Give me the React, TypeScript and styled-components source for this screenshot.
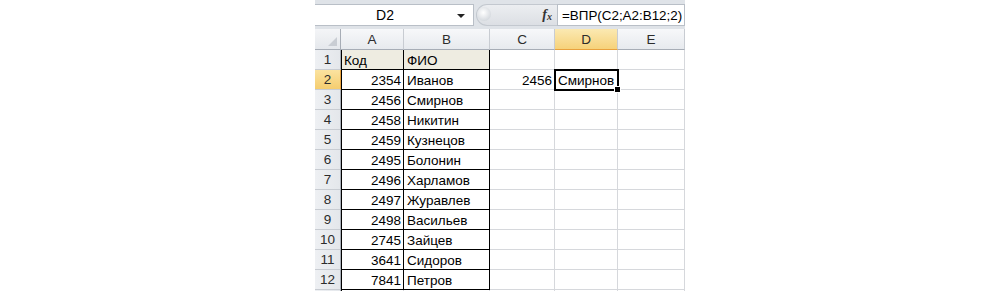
import React from "react";
import styled, { createGlobalStyle, css } from "styled-components";

const Global = createGlobalStyle`
  html, body { margin: 0; padding: 0; background: #ffffff; }
  body { font-family: "Liberation Sans", Arial, sans-serif; color: #000; }
`;

const Page = styled.div`
  width: 1000px;
  height: 291px;
  overflow: hidden;
  display: flex;
  justify-content: center;
`;

const Sheet = styled.div`
  width: 370px;
  display: flex;
  flex-direction: column;
`;

const FormulaBar = styled.div`
  height: 29px;
  box-sizing: border-box;
  padding: 4px 0 3px;
  background: #dfe3e8;
  display: flex;
  align-items: stretch;
`;

const NameBox = styled.div`
  width: 159px;
  box-sizing: border-box;
  background: #fff;
  border: 1px solid #b9bfc7;
  border-left: none;
  display: flex;
  align-items: center;
  font-size: 14px;
`;

const NameText = styled.span`
  flex: 1;
  text-align: center;
  padding-left: 4px;
`;

const DropArrow = styled.span`
  width: 0;
  height: 0;
  border-left: 4px solid transparent;
  border-right: 4px solid transparent;
  border-top: 4px solid #222;
  margin: 2px 8px 0 6px;
`;

const Splitter = styled.div`
  width: 83px;
  display: flex;
  align-items: center;
  position: relative;
`;

const Pill = styled.div`
  height: 22px;
  flex: 1;
  margin-left: 2px;
  border-radius: 11px 0 0 11px;
  background: linear-gradient(#eceef1, #dcdfe4);
  border: 1px solid #c3c8cf;
  border-right: none;
  display: flex;
  align-items: center;
  justify-content: flex-end;
  box-sizing: border-box;
`;

const Knob = styled.div`
  position: absolute;
  left: 3px;
  top: 3px;
  width: 14px;
  height: 14px;
  border-radius: 50%;
  background: radial-gradient(circle at 45% 40%, #ffffff, #d7dbe0 70%, #c2c7ce);
`;

const Fx = styled.span`
  font-family: "Liberation Serif", "Times New Roman", serif;
  font-style: italic;
  font-weight: bold;
  font-size: 14px;
  color: #333;
  margin-right: 5px;
  sub {
    font-size: 10px;
    vertical-align: -1px;
  }
`;

const FormulaInput = styled.div`
  flex: 1;
  background: #fff;
  border: 1px solid #b9bfc7;
  box-sizing: border-box;
  font-size: 13.4px;
  display: flex;
  align-items: center;
  padding-left: 4px;
  white-space: nowrap;
`;

const Grid = styled.div`
  display: grid;
  grid-template-columns: 26px 63px 86px 65px 63px 67px;
  grid-auto-rows: 20px;
  grid-template-rows: 21px;
  font-size: 13.5px;
`;

const Corner = styled.div`
  box-sizing: border-box;
  background: linear-gradient(#f4f5f7, #e5e8ec);
  border-right: 1px solid #a7adb6;
  border-bottom: 1px solid #a7adb6;
  position: relative;
  &::after {
    content: "";
    position: absolute;
    right: 3px;
    bottom: 3px;
    width: 0;
    height: 0;
    border-left: 9px solid transparent;
    border-bottom: 9px solid #c9cdd3;
  }
`;

const ColHead = styled.div<{ $active?: boolean }>`
  box-sizing: border-box;
  display: flex;
  align-items: center;
  justify-content: center;
  color: #2c2c2c;
  border-right: 1px solid #c8ccd2;
  border-bottom: 1px solid #a7adb6;
  background: linear-gradient(#f7f8fa, #e7eaee);
  ${(p) =>
    p.$active &&
    css`
      background: linear-gradient(#fbe9b2, #f6d27a);
      border-bottom: 1px solid #e8a23e;
    `}
`;

const RowHead = styled.div<{ $active?: boolean }>`
  box-sizing: border-box;
  display: flex;
  align-items: center;
  justify-content: center;
  color: #2c2c2c;
  border-right: 1px solid #a7adb6;
  border-bottom: 1px solid #c8ccd2;
  background: linear-gradient(90deg, #eef0f3, #e4e7eb);
  ${(p) =>
    p.$active &&
    css`
      background: linear-gradient(#fbe3a0, #f5cd6f);
      border-right: 1px solid #e8a23e;
    `}
`;

const Cell = styled.div<{
  $num?: boolean;
  $table?: boolean;
  $first?: boolean;
  $head?: boolean;
  $selected?: boolean;
}>`
  box-sizing: border-box;
  display: flex;
  align-items: center;
  justify-content: ${(p) => (p.$num ? "flex-end" : "flex-start")};
  padding: 1px 2px 0 3px;
  white-space: nowrap;
  position: relative;
  border-right: 1px solid #d6d8dc;
  border-bottom: 1px solid #d6d8dc;
  ${(p) =>
    p.$table &&
    css`
      border-right-color: #000;
      border-bottom-color: #000;
    `}
  ${(p) =>
    p.$first &&
    css`
      box-shadow: inset 1px 0 0 #000;
    `}
  ${(p) =>
    p.$head &&
    css`
      background: #eeece1;
    `}
  ${(p) =>
    p.$selected &&
    css`
      outline: 2px solid #000;
      outline-offset: -1px;
      z-index: 1;
      &::after {
        content: "";
        position: absolute;
        right: -4px;
        bottom: -4px;
        width: 5px;
        height: 5px;
        background: #000;
        border: 1px solid #fff;
      }
    `}
`;

const data: [string, string][] = [
  ["2354", "Иванов"],
  ["2456", "Смирнов"],
  ["2458", "Никитин"],
  ["2459", "Кузнецов"],
  ["2495", "Болонин"],
  ["2496", "Харламов"],
  ["2497", "Журавлев"],
  ["2498", "Васильев"],
  ["2745", "Зайцев"],
  ["3641", "Сидоров"],
  ["7841", "Петров"],
];

const cols = ["A", "B", "C", "D", "E"];

export default function App() {
  return (
    <>
      <Global />
      <Page>
        <Sheet>
          <FormulaBar>
            <NameBox>
              <NameText>D2</NameText>
              <DropArrow />
            </NameBox>
            <Splitter>
              <Knob />
              <Pill>
                <Fx>
                  f<sub>x</sub>
                </Fx>
              </Pill>
            </Splitter>
            <FormulaInput>=ВПР(C2;A2:B12;2)</FormulaInput>
          </FormulaBar>
          <Grid>
            <Corner />
            {cols.map((c) => (
              <ColHead key={c} $active={c === "D"}>
                {c}
              </ColHead>
            ))}
            <RowHead>1</RowHead>
            <Cell $table $first $head>
              Код
            </Cell>
            <Cell $table $head>
              ФИО
            </Cell>
            <Cell />
            <Cell />
            <Cell />
            {data.map(([code, name], i) => {
              const row = i + 2;
              return (
                <React.Fragment key={row}>
                  <RowHead $active={row === 2}>{row}</RowHead>
                  <Cell $table $first $num>
                    {code}
                  </Cell>
                  <Cell $table>{name}</Cell>
                  <Cell $num>{row === 2 ? "2456" : ""}</Cell>
                  <Cell $selected={row === 2}>{row === 2 ? "Смирнов" : ""}</Cell>
                  <Cell />
                </React.Fragment>
              );
            })}
            <RowHead />
            <Cell $first />
            <Cell />
            <Cell />
            <Cell />
            <Cell />
          </Grid>
        </Sheet>
      </Page>
    </>
  );
}
